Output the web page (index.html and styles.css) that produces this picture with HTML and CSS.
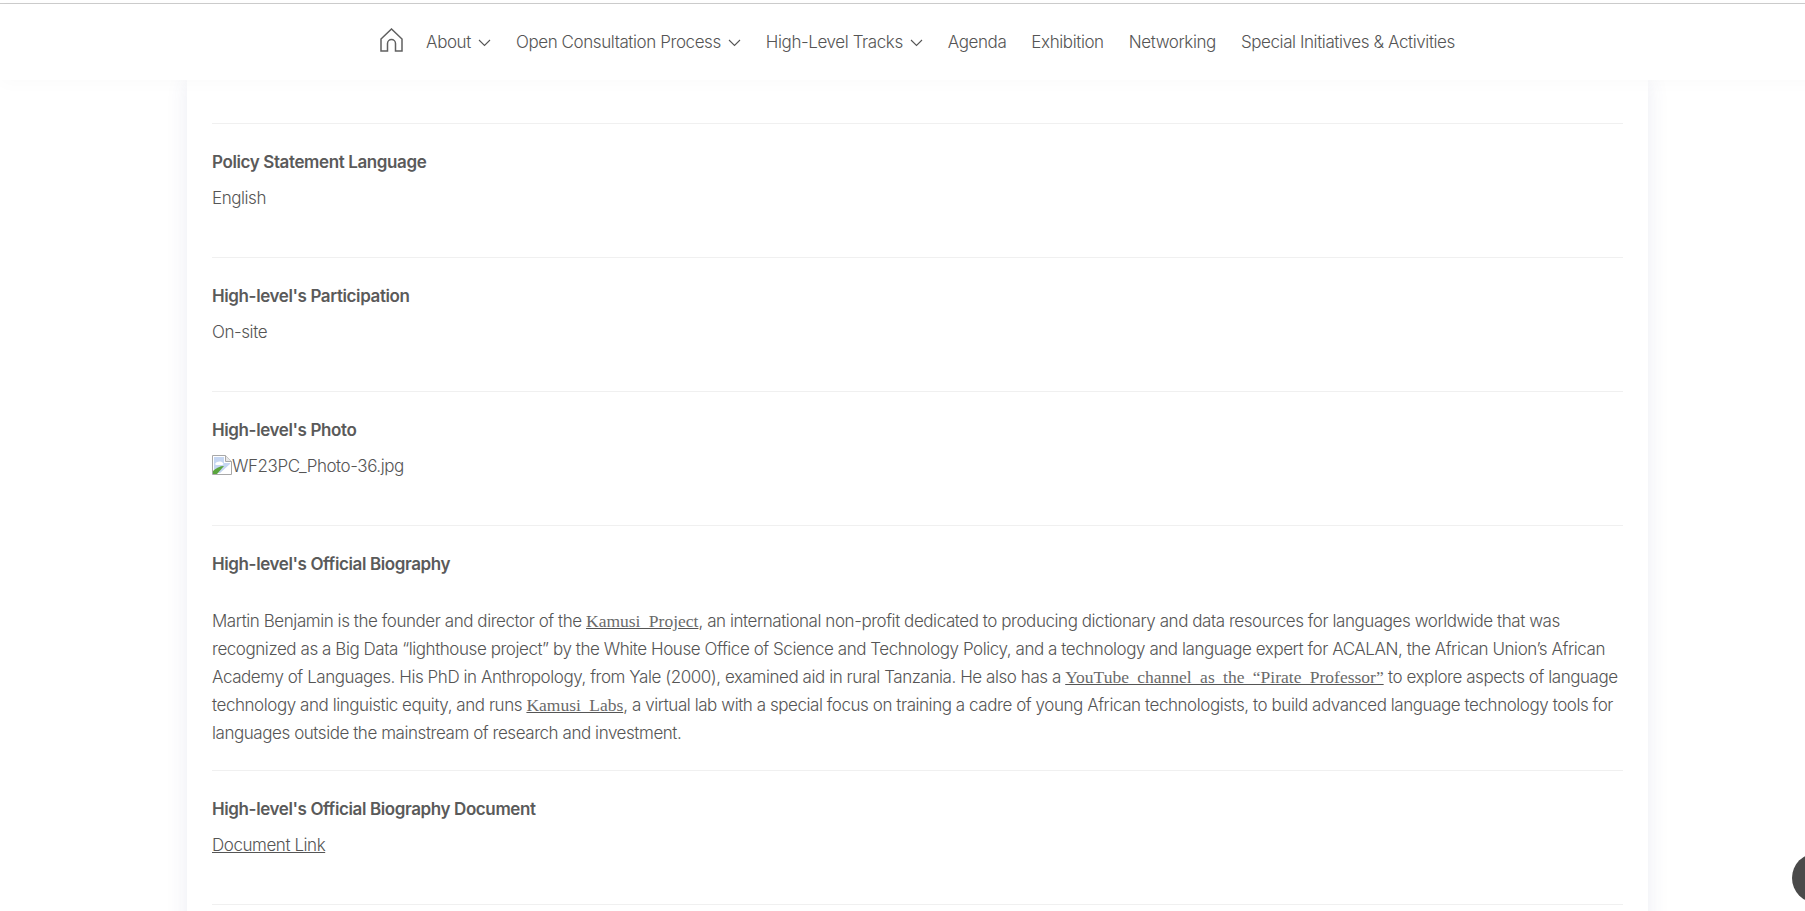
FILE: index.html
```html
<!DOCTYPE html>
<html lang="en">
<head>
    <meta charset="UTF-8">
    <title>High-level Track Facilitator</title>
    <link rel="stylesheet" href="styles.css">
</head>
<body>
    <div class="top-line"></div>
    <header class="site-header">
        <nav class="main-nav">
            <a class="nav-home" href="#" aria-label="Home">
                <svg width="23" height="24" viewBox="0 0 23 24" fill="none" stroke="#606060" stroke-width="1.5">
                    <path d="M1 11 11.5 1 22 11v12h-6.5v-7.5a4 4 0 0 0-8 0V23H1z"/>
                </svg>
            </a>
            <a href="#">About <svg class="caret" width="13" height="8" viewBox="0 0 13 8" fill="none" stroke="#555" stroke-width="1.1"><path d="M1 1l5.500 5.500L12 1"/></svg></a>
            <a href="#">Open Consultation Process <svg class="caret" width="13" height="8" viewBox="0 0 13 8" fill="none" stroke="#555" stroke-width="1.1"><path d="M1 1l5.500 5.500L12 1"/></svg></a>
            <a href="#">High-Level Tracks <svg class="caret" width="13" height="8" viewBox="0 0 13 8" fill="none" stroke="#555" stroke-width="1.1"><path d="M1 1l5.500 5.500L12 1"/></svg></a>
            <a href="#">Agenda</a>
            <a href="#">Exhibition</a>
            <a href="#">Networking</a>
            <a href="#">Special Initiatives &amp; Activities</a>
        </nav>
    </header>

    <main class="card">
        <div class="field field-cut"></div>

        <div class="field">
            <div class="field-label">Policy Statement Language</div>
            <div class="field-value">English</div>
        </div>

        <div class="field">
            <div class="field-label">High-level's Participation</div>
            <div class="field-value">On-site</div>
        </div>

        <div class="field">
            <div class="field-label">High-level's Photo</div>
            <div class="field-value photo-value">
                <svg class="broken-img" width="20" height="20" viewBox="0 0 20 20">
                    <path d="M.5.5h13l6 6v13H.5z" fill="#fff" stroke="#a8a8a8"/>
                    <path d="M13.5.5v6h6" fill="#e8e8e8" stroke="#a8a8a8"/>
                    <path d="M2 2h10v6h6v1L8 18H2z" fill="#c5d6f2"/>
                    <path d="M3 9c2-3 6-3 8-1 1 1 0 2-1 2H4z" fill="#fff"/>
                    <path d="M1 19v-3c3-3 7-5 11-5L5 19z" fill="#5aa53c"/>
                </svg><span>WF23PC_Photo-36.jpg</span>
            </div>
        </div>

        <div class="field field-bio">
            <div class="field-label">High-level's Official Biography</div>
            <p class="bio">Martin Benjamin is the founder and director of the <a class="serif-link" href="#">Kamusi Project</a>, an international non-profit dedicated to producing dictionary and data resources for languages worldwide that was recognized as a Big Data “lighthouse project” by the White House Office of Science and Technology Policy, and a technology and language expert for ACALAN, the African Union’s African Academy of Languages. His PhD in Anthropology, from Yale (2000), examined aid in rural Tanzania. He also has a <a class="serif-link" href="#">YouTube channel as the “Pirate Professor”</a> to explore aspects of language technology and linguistic equity, and runs <a class="serif-link" href="#">Kamusi Labs</a>, a virtual lab with a special focus on training a cadre of young African technologists, to build advanced language technology tools for languages outside the mainstream of research and investment.</p>
        </div>

        <div class="field">
            <div class="field-label">High-level's Official Biography Document</div>
            <div class="field-value"><a href="#">Document Link</a></div>
        </div>

        <div class="field field-cut"></div>
    </main>

    <div class="chat-bubble"></div>
</body>
</html>
```

FILE: styles.css
```css
/* Basic styling */
html { height: 911px; overflow: hidden; }
body { width: 1835px; margin: 0; background: #fff; font-family: Inter, "Liberation Sans", sans-serif; font-size: 17px; font-weight: 300; letter-spacing: -0.44px; line-height: 28px; color: #555; }
a { color: inherit; }

.top-line { height: 3px; border-bottom: 1px solid #ccc; }

/* Header */
.site-header { position: relative; z-index: 2; height: 76px; background: #fff; box-shadow: 0 4px 16px rgba(0, 0, 0, 0.02); }
.main-nav { display: flex; justify-content: center; align-items: center; gap: 25px; height: 100%; letter-spacing: -0.41px; }
.main-nav a { display: flex; align-items: center; gap: 7px; text-decoration: none; }
.nav-home { margin: -4px -2px 0 0; }
.caret { margin-top: 2px; }

/* Card */
.card { width: 1411px; margin: 0 auto; padding: 0 25px; background: #fff; box-shadow: 0 0 20px rgba(60, 70, 140, 0.1); }
.field { padding: 24px 0 45px; border-bottom: 1px solid #f0f0f0; }
.field-cut { height: 43px; padding: 0; }
.field-label { font-weight: 600; letter-spacing: -0.39px; color: #5a5a5a; }
.field-value { margin-top: 8px; }
.photo-value { display: flex; align-items: flex-start; }
.broken-img { margin-top: 3px; }
.field-bio { padding-bottom: 23px; }

.bio { margin: 29px 0 0; }
.serif-link { font-family: "Liberation Serif", serif; font-size: 17.5px; font-weight: 400; letter-spacing: 0; line-height: 1; word-spacing: 4px; color: #6a6a6a; text-decoration-color: #555; }

.chat-bubble { position: fixed; left: 1792px; top: 853px; width: 50px; height: 50px; border-radius: 50%; background: #4a4a4a; }
```
